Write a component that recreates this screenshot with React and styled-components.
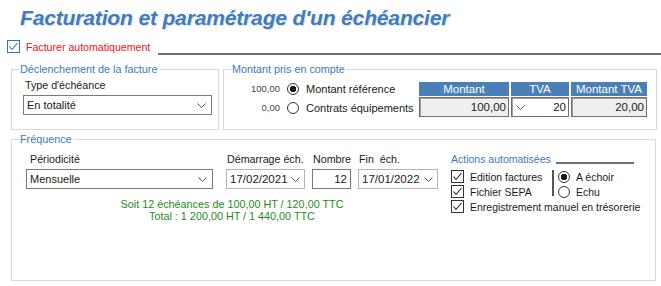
import React from 'react';
import styled, {createGlobalStyle} from 'styled-components';

const GlobalStyle = createGlobalStyle`
  html, body {
    margin: 0;
    padding: 0;
    background: #ffffff;
  }
  body {
    font-family: "Liberation Sans", Arial, sans-serif;
    font-size: 10.7px;
    color: #1a1a1a;
  }
`;

const Chevron = ({color = '#555'}) => (
    <svg width="9" height="5" viewBox="0 0 9 5">
        <polyline points="0.5,0.5 4.5,4.5 8.5,0.5" fill="none" stroke={color} strokeWidth="1"/>
    </svg>
);

const CheckBox = ({blue}) => (
    <Box $blue={blue}>
        <svg width="11" height="11" viewBox="0 0 11 11">
            <polyline points="1.5,5.5 4,8.5 9.5,2" fill="none" stroke={blue ? '#2f6fd6' : '#222'}
                      strokeWidth="1.1"/>
        </svg>
    </Box>
);

const Radio = ({checked}) => <RadioDot $checked={checked}/>;

const App = () => {
    return (
        <>
            <GlobalStyle/>
            <Page>
                <Title>Facturation et paramétrage d'un échéancier</Title>

                <AutoRow>
                    <CheckBox blue/>
                    <AutoLabel>Facturer automatiquement</AutoLabel>
                    <Rule/>
                </AutoRow>

                <TopRow>
                    <Group>
                        <Legend>Déclenchement de la facture</Legend>
                        <GroupBody $pad="2px 5px 0 11px">
                            <FieldLabel $indent={2}>Type d'échéance</FieldLabel>
                            <Select $width={189}>
                                <span>En totalité</span>
                                <Chevron/>
                            </Select>
                        </GroupBody>
                    </Group>

                    <Group>
                        <Legend>Montant pris en compte</Legend>
                        <GroupBody $pad="0 9px 0 12px">
                            <AmountArea>
                                <Choices>
                                    <SmallValue>100,00</SmallValue>
                                    <Radio checked/>
                                    <span>Montant référence</span>
                                    <SmallValue>0,00</SmallValue>
                                    <Radio/>
                                    <span>Contrats équipements</span>
                                </Choices>
                                <AmountTable>
                                    <HeadCell>Montant</HeadCell>
                                    <HeadCell>TVA</HeadCell>
                                    <HeadCell>Montant TVA</HeadCell>
                                    <ValueCell $grey>100,00</ValueCell>
                                    <ValueCell $split>
                                        <Chevron/>
                                        <span>20</span>
                                    </ValueCell>
                                    <ValueCell $grey>20,00</ValueCell>
                                </AmountTable>
                            </AmountArea>
                        </GroupBody>
                    </Group>
                </TopRow>

                <FreqGroup>
                    <Legend>Fréquence</Legend>
                    <FreqBody>
                        <FreqMain>
                            <FieldsRow>
                                <Field $width={187}>
                                    <FieldLabel $indent={4}>Périodicité</FieldLabel>
                                    <Select $width={187}>
                                        <span>Mensuelle</span>
                                        <Chevron/>
                                    </Select>
                                </Field>
                                <Field $width={79}>
                                    <FieldLabel>Démarrage éch.</FieldLabel>
                                    <DateBox $width={79}>
                                        <span>17/02/2021</span>
                                        <Chevron/>
                                    </DateBox>
                                </Field>
                                <Field $width={39}>
                                    <FieldLabel>Nombre</FieldLabel>
                                    <NumberBox>12</NumberBox>
                                </Field>
                                <Field $width={80}>
                                    <FieldLabel>Fin&nbsp; éch.</FieldLabel>
                                    <DateBox $width={80}>
                                        <span>17/01/2022</span>
                                        <Chevron/>
                                    </DateBox>
                                </Field>
                            </FieldsRow>
                            <Summary>
                                <div>Soit 12 échéances de 100,00 HT / 120,00 TTC</div>
                                <div>Total : 1 200,00 HT / 1 440,00 TTC</div>
                            </Summary>
                        </FreqMain>

                        <Actions>
                            <ActionsTitle>
                                <span>Actions automatisées</span>
                                <Rule $thin/>
                            </ActionsTitle>
                            <ActionsGrid>
                                <CheckList $width={101}>
                                    <CheckRow><CheckBox/><span>Edition factures</span></CheckRow>
                                    <CheckRow><CheckBox/><span>Fichier SEPA</span></CheckRow>
                                </CheckList>
                                <Separator/>
                                <CheckList>
                                    <CheckRow><Radio checked/><span>A échoir</span></CheckRow>
                                    <CheckRow><Radio/><span>Echu</span></CheckRow>
                                </CheckList>
                            </ActionsGrid>
                            <CheckRow><CheckBox/><span>Enregistrement manuel en trésorerie</span></CheckRow>
                        </Actions>
                    </FreqBody>
                </FreqGroup>
            </Page>
        </>
    );
};

export default App;

const Page = styled.div`
  width: 661px;
  height: 286px;
  box-sizing: border-box;
  padding: 6px 5px 0 11px;
  overflow: hidden;
`;

const Title = styled.h1`
  margin: 0 0 0 9px;
  font-family: "Liberation Sans", Arial, sans-serif;
  font-style: italic;
  font-weight: bold;
  font-size: 21px;
  line-height: 24px;
  color: #3f7dbe;
  text-shadow: 1px 1px 0 rgba(20, 50, 90, 0.18);
  letter-spacing: -0.15px;
`;

const AutoRow = styled.div`
  display: flex;
  align-items: center;
  height: 13px;
  margin: 10px -5px 0 -4px;
`;

const Box = styled.span`
  display: inline-flex;
  align-items: center;
  justify-content: center;
  width: 11px;
  height: 11px;
  border: 1px solid ${p => (p.$blue ? '#2f6fd6' : '#333')};
  background: #fff;
  flex-shrink: 0;
`;

const AutoLabel = styled.span`
  color: #f0101e;
  margin-left: 6px;
  font-size: 10.6px;
  white-space: nowrap;
`;

const Rule = styled.div`
  flex: 1;
  align-self: flex-end;
  margin-left: ${p => (p.$thin ? '5px' : '8px')};
  margin-bottom: ${p => (p.$thin ? '2px' : '-2px')};
  border-bottom: 2px solid #707070;
`;

const TopRow = styled.div`
  display: grid;
  grid-template-columns: 208px 434px;
  column-gap: 4px;
  margin-top: 9px;
  height: 68px;
`;

const Group = styled.fieldset`
  margin: 0;
  padding: 0;
  border: 1px solid #d9d9d9;
  min-width: 0;
  box-sizing: border-box;
`;

const GroupBody = styled.div`
  padding: ${p => p.$pad};
`;

const Legend = styled.legend`
  padding: 0 2px 0 1px;
  margin-left: 7px;
  color: #3b79bd;
  font-size: 10.8px;
  line-height: 14px;
`;

const FieldLabel = styled.div`
  padding-left: ${p => p.$indent || 1}px;
  line-height: 14px;
  height: 14px;
  margin-bottom: 3px;
  white-space: nowrap;
`;

const Select = styled.div`
  display: flex;
  align-items: center;
  justify-content: space-between;
  box-sizing: border-box;
  width: ${p => p.$width}px;
  height: 20px;
  padding: 0 5px 0 3px;
  border: 1px solid #7a7a7a;
  background: #fff;
  font-size: 11px;
`;

const AmountArea = styled.div`
  display: flex;
  justify-content: space-between;
  align-items: flex-start;
`;

const Choices = styled.div`
  display: grid;
  grid-template-columns: 44px 12px auto;
  grid-auto-rows: 19px;
  column-gap: 7px;
  align-items: center;
  margin-top: 3px;
  font-size: 11px;
`;

const SmallValue = styled.span`
  text-align: right;
  font-size: 9.5px;
  color: #444;
`;

const RadioDot = styled.span`
  width: 12px;
  height: 12px;
  box-sizing: border-box;
  border-radius: 50%;
  border: 1px solid #333;
  background: ${p => (p.$checked ? 'radial-gradient(circle, #1a1a1a 0 3px, #fff 3.5px)' : '#fff')};
  flex-shrink: 0;
`;

const AmountTable = styled.div`
  display: grid;
  grid-template-columns: 90px 58px 76px;
  grid-template-rows: 14px 20px;
  column-gap: 2px;
  row-gap: 1px;
  margin-top: 6px;
`;

const HeadCell = styled.div`
  background: #4a80b6;
  color: #fff;
  text-align: center;
  line-height: 14px;
  font-size: 11.5px;
`;

const ValueCell = styled.div`
  display: flex;
  align-items: center;
  justify-content: ${p => (p.$split ? 'space-between' : 'flex-end')};
  box-sizing: border-box;
  padding: 0 2px 0 ${p => (p.$split ? '4px' : '3px')};
  border: 1px solid #6e6e6e;
  box-shadow: inset 1px 1px 0 #a0a0a0;
  background: ${p => (p.$grey ? '#efefef' : '#fff')};
  font-size: 11.5px;
`;

const FreqGroup = styled.fieldset`
  margin: 2px 0 0 0;
  padding: 0;
  border: 1px solid #d9d9d9;
  height: 149px;
  box-sizing: border-box;
`;

const FreqBody = styled.div`
  display: flex;
  gap: 13px;
  padding: 6px 8px 0 14px;
`;

const FreqMain = styled.div`
  display: flex;
  flex-direction: column;
`;

const FieldsRow = styled.div`
  display: flex;
  gap: 7px;

  & > div:first-child {
    margin-right: 6px;
  }
`;

const Field = styled.div`
  display: flex;
  flex-direction: column;
  flex: none;
  width: ${p => p.$width}px;
`;

const DateBox = styled(Select)`
  border-color: #b4b4b4;
  padding: 0 4px 0 3px;
  font-size: 11.5px;
`;

const NumberBox = styled.div`
  box-sizing: border-box;
  width: 39px;
  height: 20px;
  border: 1px solid #7a7a7a;
  text-align: right;
  padding-right: 3px;
  line-height: 18px;
  font-size: 11.5px;
`;

const Summary = styled.div`
  margin-top: 9px;
  text-align: center;
  color: #1f8a1f;
  line-height: 12px;
  font-size: 10.8px;
`;

const Actions = styled.div`
  display: flex;
  flex-direction: column;
  width: 183px;
`;

const ActionsTitle = styled.div`
  display: flex;
  color: #3b79bd;
  line-height: 14px;
  font-size: 10.5px;
  white-space: nowrap;
  margin-bottom: 3px;
`;

const ActionsGrid = styled.div`
  display: flex;
  align-items: stretch;
`;

const CheckList = styled.div`
  display: flex;
  flex-direction: column;
  width: ${p => (p.$width ? `${p.$width}px` : 'auto')};
`;

const CheckRow = styled.div`
  display: flex;
  align-items: center;
  gap: 6px;
  height: 15px;
  font-size: 10.5px;
  white-space: nowrap;
`;

const Separator = styled.div`
  width: 2px;
  background: #555;
  margin: 1px 4px 3px 0;
`;
